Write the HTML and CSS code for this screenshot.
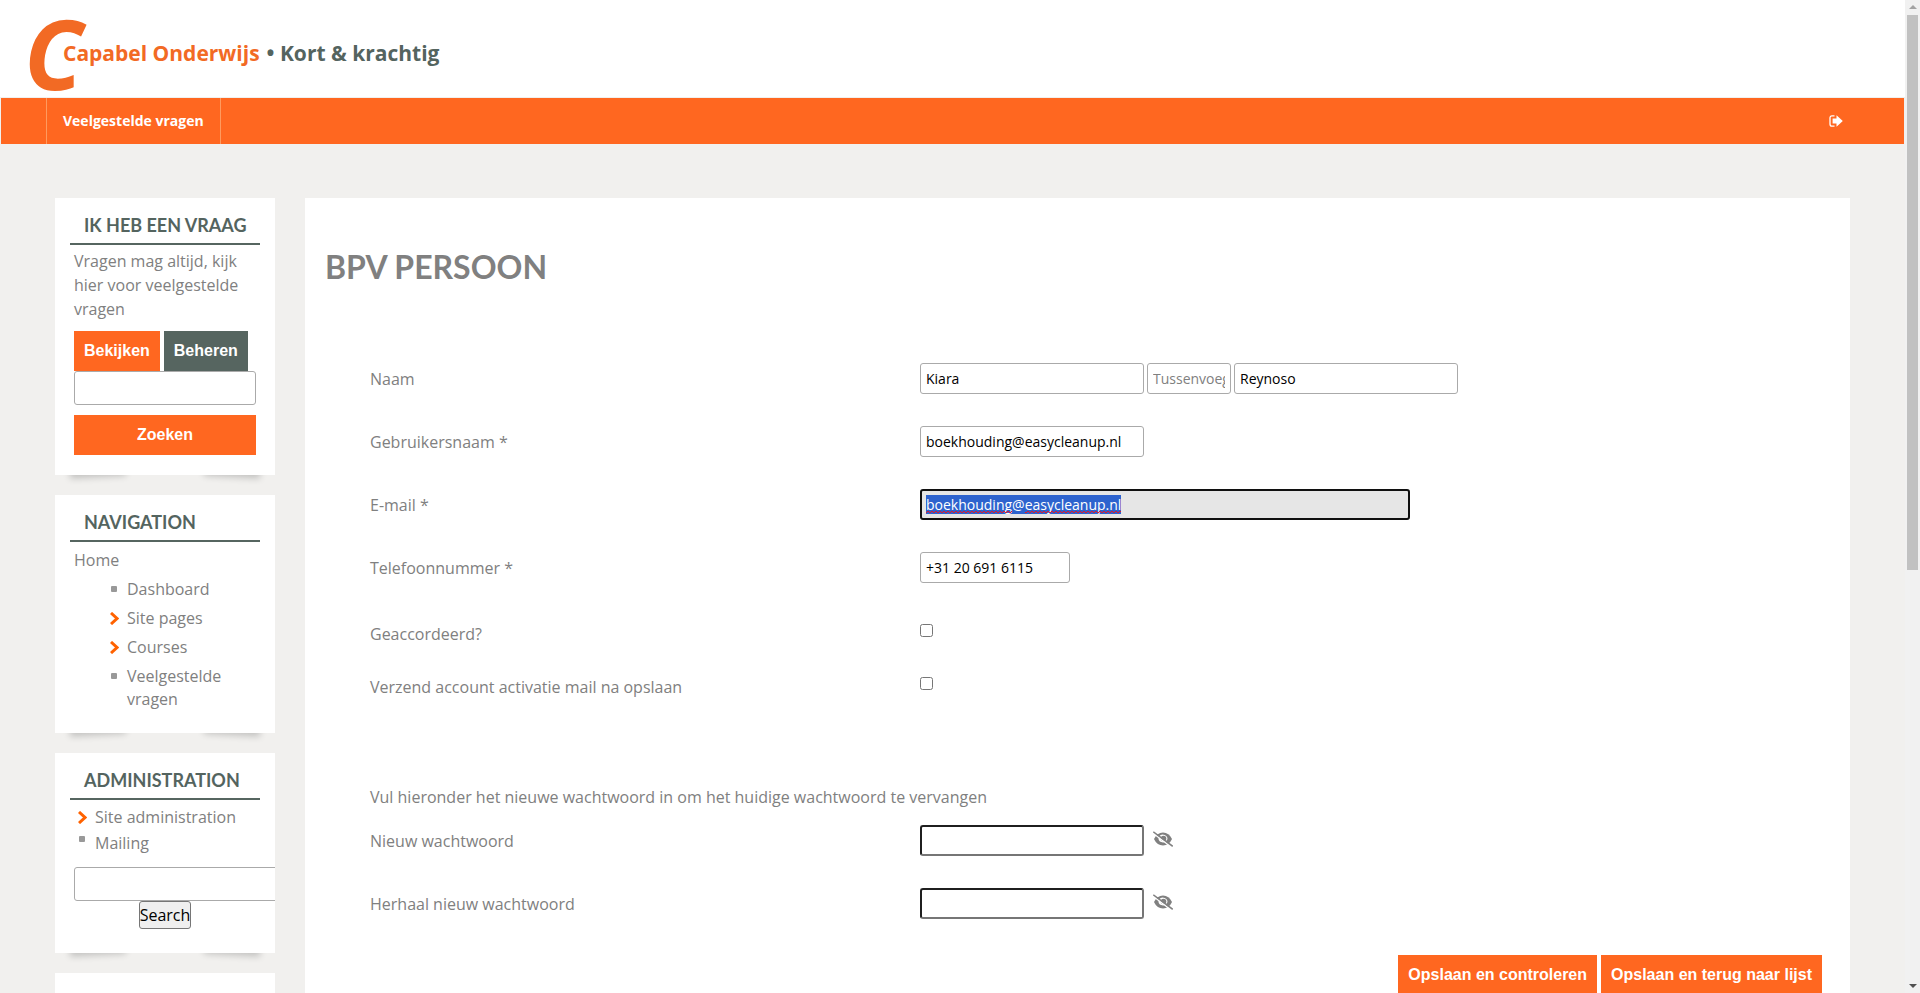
FILE: index.html
```html
<!DOCTYPE html>
<html lang="nl">
<head>
<meta charset="utf-8">
<title>BPV Persoon</title>
<link rel="stylesheet" href="styles.css">
</head>
<body>
<div class="window">
  <div class="page">
    <header class="header">
      <a class="logo" href="#"><span class="logo-mark">C</span><span class="logo-name">Capabel Onderwijs</span><span class="logo-tag">• Kort &amp; krachtig</span></a>
    </header>
    <nav class="navbar">
      <a class="nav-item" href="#">Veelgestelde vragen</a>
      <a class="logout" href="#" aria-label="Uitloggen">
        <svg width="14" height="12" viewBox="0 0 14 12"><path d="M5.500 .8H3Q1 .8 1 3V9Q1 11.200 3 11.200H5.500" fill="none" stroke="#fff" stroke-width="1.300"/><path d="M3.600 3.400H7.500V.2L13.800 6L7.500 11.800V8.600H3.600Z" fill="#fff"/></svg>
      </a>
    </nav>
    <div class="columns">
      <aside class="sidebar">
        <section class="block"><div class="block-inner">
          <h2>IK HEB EEN VRAAG</h2>
          <div class="content">
            <p class="intro">Vragen mag altijd, kijk hier voor veelgestelde vragen</p>
            <div class="pair"><button class="btn">Bekijken</button><button class="btn dark">Beheren</button></div>
            <input class="search" type="text" aria-label="Zoek een vraag">
            <button class="btn wide">Zoeken</button>
          </div>
        </div></section>
        <section class="block"><div class="block-inner">
          <h2>NAVIGATION</h2>
          <div class="content">
            <a class="home" href="#">Home</a>
            <ul class="tree nested">
              <li class="leaf"><a href="#">Dashboard</a></li>
              <li class="branch"><svg class="chevron" viewBox="0 0 9 13"><path d="M1 1L7 6.500L1 12"/></svg><a href="#">Site pages</a></li>
              <li class="branch"><svg class="chevron" viewBox="0 0 9 13"><path d="M1 1L7 6.500L1 12"/></svg><a href="#">Courses</a></li>
              <li class="leaf"><a href="#">Veelgestelde vragen</a></li>
            </ul>
          </div>
        </div></section>
        <section class="block"><div class="block-inner">
          <h2>ADMINISTRATION</h2>
          <div class="content">
            <ul class="tree admin">
              <li class="branch"><svg class="chevron" viewBox="0 0 9 13"><path d="M1 1L7 6.500L1 12"/></svg><a href="#">Site administration</a></li>
              <li class="leaf"><a href="#">Mailing</a></li>
            </ul>
            <input class="search overflow" type="text" aria-label="Search in settings">
            <button class="plain">Search</button>
          </div>
        </div></section>
        <section class="block"><div class="block-inner empty"></div></section>
      </aside>
      <main class="main">
        <h1>BPV PERSOON</h1>
        <form class="form">
          <div class="row"><label for="fn">Naam</label><div class="controls">
            <input class="field medium" id="fn" type="text" value="Kiara">
            <input class="field tiny" type="text" placeholder="Tussenvoegsel" aria-label="Tussenvoegsel">
            <input class="field medium" type="text" value="Reynoso" aria-label="Achternaam"></div></div>
          <div class="row"><label for="un">Gebruikersnaam *</label><div class="controls"><input class="field medium" id="un" type="text" value="boekhouding@easycleanup.nl"></div></div>
          <div class="row"><label for="em">E-mail *</label><div class="controls">
            <div class="spell"><input class="field active" id="em" type="text" value="boekhouding@easycleanup.nl" autofocus>
            <svg class="squiggle" width="195" height="4"><defs><pattern id="w" width="4" height="4" patternUnits="userSpaceOnUse"><path d="M0 3L2 1L4 3" fill="none" stroke="#e0182d"/></pattern></defs><rect width="86" height="4" fill="url(#w)"/><rect x="99" width="96" height="4" fill="url(#w)"/></svg></div></div></div>
          <div class="row"><label for="tel">Telefoonnummer *</label><div class="controls"><input class="field small" id="tel" type="text" value="+31 20 691 6115"></div></div>
          <div class="checks">
            <div class="row check"><label for="ok">Geaccordeerd?</label><input id="ok" type="checkbox"></div>
            <div class="row check"><label for="send">Verzend account activatie mail na opslaan</label><input id="send" type="checkbox"></div>
          </div>
          <p class="note">Vul hieronder het nieuwe wachtwoord in om het huidige wachtwoord te vervangen</p>
          <div class="row"><label for="p1">Nieuw wachtwoord</label><div class="controls"><input class="field medium password" id="p1" type="password">
            <svg class="eye" viewBox="0 0 20 16"><use href="#eye-off"/></svg></div></div>
          <div class="row"><label for="p2">Herhaal nieuw wachtwoord</label><div class="controls"><input class="field medium password" id="p2" type="password">
            <svg class="eye" viewBox="0 0 20 16"><g id="eye-off"><path d="M1 8Q4 1.500 10 1.500T19 8Q16 14.500 10 14.500T1 8Z" fill="#808080"/><path d="M5.500 8Q5.500 4 9.500 3.500Q14.500 4 14.500 8Q13 11.500 10 11.500Q6 11 5.500 8Z" fill="#fff"/><circle cx="10.500" cy="7.500" r="2.800" fill="#808080"/><path d="M0 2L19 16.500" stroke="#fff" stroke-width="1.500"/><path d="M.3 .8L19.700 15.300" stroke="#808080" stroke-width="1.500"/></g></svg></div></div>
        </form>
        <div class="actions"><button class="btn">Opslaan en controleren</button><button class="btn">Opslaan en terug naar lijst</button></div>
      </main>
    </div>
  </div>
  <div class="scrollbar" aria-hidden="true"><span class="arrow up"></span><span class="thumb"></span><span class="arrow down"></span></div>
</div>
<script>document.getElementById('em').select();</script>
</body>
</html>
```
FILE: styles.css
```css
* { box-sizing: border-box; }
body { margin: 0; background: #f1f0ee; color: #808080; font: 16px/24px "Open Sans", sans-serif; }
a { color: inherit; text-decoration: none; }
h1, h2, p, ul { margin: 0; padding: 0; }
ul { list-style: none; }
input, button { font-family: inherit; margin: 0; }

.window { display: grid; grid-template-columns: minmax(0, 1fr) 15px; height: 100vh; overflow: hidden; }
.page { min-width: 0; height: 100vh; overflow: hidden; }

.header { height: 97px; background: #fff; padding-left: 24px; }
.logo { display: inline-flex; align-items: center; height: 106px; font-size: 21px; font-weight: 700; white-space: nowrap; color: #f26a24; }
.logo-mark { font-size: 96px; font-style: italic; line-height: 104px; width: 39px; }
.logo-name { margin-right: 7px; }
.logo-tag { color: #54645f; }

.navbar { display: flex; justify-content: space-between; align-items: center; height: 46px; margin: 1px 1px 0; padding: 0 61px 0 45px; background: #ff6720; }
.nav-item { align-self: stretch; padding: 0 16px; border: solid #ff9a5f; border-width: 0 1px; color: #fff; font-size: 14px; font-weight: 700; line-height: 46px; }
.logout { display: flex; }

.columns { display: flex; align-items: flex-start; gap: 30px; padding: 54px 55px 0; }
.sidebar { flex: 0 0 220px; min-width: 0; display: flex; flex-direction: column; gap: 20px; }
.block { position: relative; isolation: isolate; }
.block::before, .block::after { content: ""; position: absolute; z-index: -1; bottom: 10px; width: 56px; height: 20px; box-shadow: 0 12px 7px rgba(0, 0, 0, .2); }
.block::before { left: 14px; transform: rotate(-3deg); }
.block::after { right: 14px; transform: rotate(3deg); }
.block-inner { background: #fff; padding: 10px 15px 20px; overflow: hidden; }
.empty { height: 100px; }
h2 { padding: 0 14px 1px; border-bottom: 2px solid #566560; color: #54645f; font: 700 18px/34px Lato, sans-serif; white-space: nowrap; }
.content { padding: 4px 4px 0; }
.intro { margin-bottom: 10px; }
.pair { display: flex; gap: 4px; }
.btn { height: 40px; padding: 0 10px; border: 0; border-radius: 0; background: #ff6720; color: #fff; font: 700 16px "Liberation Sans", sans-serif; white-space: nowrap; }
.dark { background: #566560; }
.wide { width: 100%; }
.search { display: block; width: 100%; height: 34px; margin-bottom: 10px; border: 1px solid #aaa; border-radius: 3px; background: #fff; }
.overflow { width: 220px; margin: 12px 0 0; }
.plain { display: block; margin: 0 auto 4px; width: fit-content; height: 28px; padding: 0; border: 1px solid #767676; border-radius: 3px; background: #efefef; color: #000; font-size: 16px; }
.home { display: block; margin-top: 2px; }
.tree li { position: relative; line-height: 23px; }
.nested { margin: 6px 0 2px 53px; }
.nested li + li { margin-top: 6px; }
.admin { margin-left: 21px; padding-top: 2px; }
.admin li + li { margin-top: 3px; }
.leaf::before { content: ""; position: absolute; left: -16px; top: 8px; width: 6px; height: 6px; border-radius: 1px; background: #999; }
.admin .leaf::before { top: 4px; }
.chevron { position: absolute; left: -17px; top: 5px; width: 9px; height: 13px; fill: none; stroke: #ff6200; stroke-width: 3; }

.main { flex: 1; min-width: 0; min-height: 900px; padding: 0 28px 24px 20px; background: #fff; }
h1 { padding-top: 48px; font: 700 32px/42px Lato, sans-serif; }
.form { margin: 75px 0 36px 45px; }
.row { display: grid; grid-template-columns: minmax(0, 550px) minmax(0, 1fr); align-items: center; min-height: 31px; margin-bottom: 32px; }
.row:last-child { margin-bottom: 0; }
.controls { display: flex; align-items: center; gap: 3px; }
.field { height: 31px; padding: 0 5px; border: 1px solid #aaa; border-radius: 3px; background: #fff; color: #000; font-size: 14px; outline: 0; }
.field::placeholder { color: #808080; }
.medium { width: 224px; }
.small { width: 150px; }
.tiny { width: 84px; }
.active { display: block; width: 490px; padding: 0 4px; border: 2px solid #101010; background: #e6e6e6; }
.active::selection { background: #2d63ce; color: #fff; }
.spell { position: relative; }
.squiggle { position: absolute; left: 6px; top: 21px; }
.password { border: 2px solid #767676; border-top-color: #1f1f1f; border-left-color: #1f1f1f; }
.eye { width: 20px; height: 16px; margin: 0 0 3px 6px; }
.checks { padding-top: 3px; margin-bottom: 83px; }
.check { margin-bottom: 22px; }
.check input { width: 13px; height: 13px; align-self: start; margin-top: 6px; }
.note { margin-bottom: 16px; }
.actions { display: flex; justify-content: flex-end; gap: 4px; }

.scrollbar { display: flex; flex-direction: column; align-items: center; background: #f1f1f1; }
.thumb { width: 11px; height: 555px; max-height: 56%; background: #c1c1c1; }
.arrow { border: 4px solid transparent; }
.up { margin: 1px 0 6px; border-bottom-color: #a3a3a3; }
.down { margin: auto 0 1px; border-top-color: #505050; }
```
